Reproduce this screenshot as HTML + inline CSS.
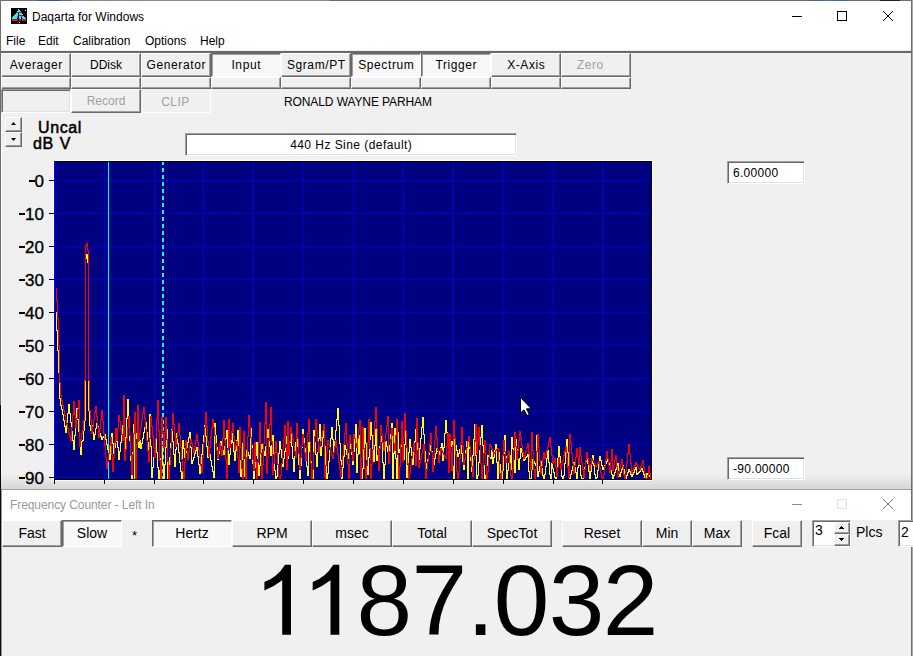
<!DOCTYPE html>
<html><head><meta charset="utf-8">
<style>
*{margin:0;padding:0;box-sizing:border-box}
html,body{width:913px;height:656px;overflow:hidden;background:#f0f0f0;font-family:"Liberation Sans",sans-serif;color:#000}
.a{position:absolute}
.t{position:absolute;white-space:nowrap;line-height:1}
/* raised button */
.btn{position:absolute;background:#f0f0f0;border-top:1px solid #fff;border-left:1px solid #fff;border-right:1px solid #696969;border-bottom:1px solid #696969;box-shadow:inset -1px -1px 0 #a0a0a0}
.prs{position:absolute;background:#f8f8f8;border-top:1px solid #696969;border-left:1px solid #696969;border-right:1px solid #fff;border-bottom:1px solid #fff;box-shadow:inset 1px 1px 0 #a0a0a0}
.sunk{position:absolute;border-top:1px solid #a0a0a0;border-left:1px solid #a0a0a0;border-right:1px solid #fff;border-bottom:1px solid #fff;box-shadow:inset 1px 1px 0 #696969,inset -1px -1px 0 #e3e3e3}
.lbl{position:absolute;left:0;right:0;text-align:center;white-space:nowrap;line-height:1}
</style></head><body>
<!-- background strip top -->

<!-- main window -->
<div class="a" style="left:0;top:0;width:912px;height:489px;background:#f0f0f0;border:1px solid #6e6e6e;border-bottom:none"></div>
<div class="a" style="left:1px;top:1px;width:910px;height:49px;background:#fff"></div>
<div class="a" style="left:1px;top:474px;width:910px;height:15px;background:linear-gradient(#f0f0f0,#d6d6d6)"></div>
<div class="a" style="left:1px;top:50px;width:910px;height:1px;background:#f0f0f0"></div>
<div class="a" style="left:1px;top:51px;width:910px;height:2px;background:#696969"></div>

<!-- title -->
<svg class="a" style="left:11px;top:8px" width="16" height="16" viewBox="0 0 16 16" shape-rendering="crispEdges"><rect width="16" height="16" fill="#000"/>
<rect x="7" y="1" width="1" height="1" fill="#00ffff"/>
<rect x="7" y="2" width="2" height="1" fill="#00ffff"/>
<rect x="14" y="2" width="1" height="1" fill="#ffffff"/>
<rect x="6" y="3" width="4" height="1" fill="#00ffff"/>
<rect x="5" y="4" width="5" height="1" fill="#ff0000"/>
<rect x="5" y="5" width="2" height="1" fill="#00ffff"/>
<rect x="8" y="5" width="3" height="1" fill="#00ffff"/>
<rect x="4" y="6" width="3" height="1" fill="#00ffff"/>
<rect x="8" y="6" width="4" height="1" fill="#00ffff"/>
<rect x="3" y="7" width="4" height="1" fill="#00ffff"/>
<rect x="8" y="7" width="4" height="1" fill="#ff0000"/>
<rect x="2" y="8" width="4" height="1" fill="#00ffff"/>
<rect x="6" y="8" width="1" height="1" fill="#ff00ff"/>
<rect x="8" y="8" width="2" height="1" fill="#00ffff"/>
<rect x="10" y="8" width="1" height="1" fill="#ff0000"/>
<rect x="11" y="8" width="2" height="1" fill="#00ffff"/>
<rect x="1" y="9" width="5" height="1" fill="#00ffff"/>
<rect x="6" y="9" width="1" height="1" fill="#ff00ff"/>
<rect x="8" y="9" width="2" height="1" fill="#00ffff"/>
<rect x="11" y="9" width="3" height="1" fill="#00ffff"/>
<rect x="1" y="10" width="5" height="1" fill="#00ffff"/>
<rect x="8" y="10" width="2" height="1" fill="#00ffff"/>
<rect x="11" y="10" width="1" height="1" fill="#ff00ff"/>
<rect x="12" y="10" width="3" height="1" fill="#00ffff"/>
<rect x="1" y="11" width="6" height="1" fill="#ff0000"/>
<rect x="8" y="11" width="2" height="1" fill="#ff0000"/>
<rect x="11" y="11" width="1" height="1" fill="#ff00ff"/>
<rect x="12" y="11" width="3" height="1" fill="#ff0000"/>
<rect x="1" y="12" width="6" height="1" fill="#ff0000"/>
<rect x="8" y="12" width="2" height="1" fill="#ff0000"/>
<rect x="11" y="12" width="1" height="1" fill="#ff00ff"/>
<rect x="12" y="12" width="3" height="1" fill="#ff0000"/>
<rect x="8" y="14" width="1" height="1" fill="#ffffff"/>
</svg>
<div class="t" style="left:32px;top:11px;font-size:12px">Daqarta for Windows</div>
<!-- window controls -->
<div class="a" style="left:792px;top:16px;width:10px;height:1px;background:#000"></div>
<div class="a" style="left:837px;top:11px;width:10px;height:10px;border:1px solid #000"></div>
<svg class="a" style="left:883px;top:11px" width="10" height="10" viewBox="0 0 10 10"><path d="M0 0 L10 10 M10 0 L0 10" stroke="#000" stroke-width="1"/></svg>
<div class="a" style="left:38px;top:0;width:22px;height:1px;background:#3a5a8a"></div>
<div class="a" style="left:72px;top:0;width:258px;height:1px;background:#8a8a8a"></div>
<div class="a" style="left:810px;top:0;width:16px;height:1px;background:#3a6a9a"></div>
<div class="a" style="left:834px;top:0;width:14px;height:1px;background:#3a6a9a"></div>
<div class="a" style="left:880px;top:0;width:20px;height:1px;background:#222"></div>

<!-- menu -->
<div class="t" style="left:6px;top:35px;font-size:12px">File</div>
<div class="t" style="left:38px;top:35px;font-size:12px">Edit</div>
<div class="t" style="left:73px;top:35px;font-size:12px">Calibration</div>
<div class="t" style="left:145px;top:35px;font-size:12px">Options</div>
<div class="t" style="left:200px;top:35px;font-size:12px">Help</div>

<div class="btn" style="left:1px;top:53px;width:70px;height:24px"><div class="lbl" style="top:5px;font-size:12px;color:#000;letter-spacing:0.6px;padding-left:0.6px;">Averager</div></div>
<div class="btn" style="left:1px;top:77px;width:70px;height:12px"></div>
<div class="btn" style="left:71px;top:53px;width:70px;height:24px"><div class="lbl" style="top:5px;font-size:12px;color:#000;letter-spacing:0px;padding-left:0px;">DDisk</div></div>
<div class="btn" style="left:71px;top:77px;width:70px;height:12px"></div>
<div class="btn" style="left:141px;top:53px;width:70px;height:24px"><div class="lbl" style="top:5px;font-size:12px;color:#000;letter-spacing:0.6px;padding-left:0.6px;">Generator</div></div>
<div class="btn" style="left:141px;top:77px;width:70px;height:12px"></div>
<div class="prs" style="left:211px;top:53px;width:70px;height:24px"><div class="lbl" style="top:5px;font-size:12px;color:#000;letter-spacing:0.6px;padding-left:0.6px;">Input</div></div>
<div class="btn" style="left:211px;top:77px;width:70px;height:12px"></div>
<div class="btn" style="left:281px;top:53px;width:70px;height:24px"><div class="lbl" style="top:5px;font-size:12px;color:#000;letter-spacing:0.6px;padding-left:0.6px;">Sgram/PT</div></div>
<div class="btn" style="left:281px;top:77px;width:70px;height:12px"></div>
<div class="prs" style="left:351px;top:53px;width:70px;height:24px"><div class="lbl" style="top:5px;font-size:12px;color:#000;letter-spacing:0.6px;padding-left:0.6px;">Spectrum</div></div>
<div class="btn" style="left:351px;top:77px;width:70px;height:12px"></div>
<div class="prs" style="left:421px;top:53px;width:70px;height:24px"><div class="lbl" style="top:5px;font-size:12px;color:#000;letter-spacing:0.6px;padding-left:0.6px;">Trigger</div></div>
<div class="btn" style="left:421px;top:77px;width:70px;height:12px"></div>
<div class="btn" style="left:491px;top:53px;width:70px;height:24px"><div class="lbl" style="top:5px;font-size:12px;color:#000;letter-spacing:0.6px;padding-left:0.6px;">X-Axis</div></div>
<div class="btn" style="left:491px;top:77px;width:70px;height:12px"></div>
<div class="btn" style="left:561px;top:53px;width:70px;height:24px"><div class="lbl" style="top:5px;font-size:12px;color:#a0a0a0;letter-spacing:0.6px;padding-left:0.6px;left:-12px">Zero</div></div>
<div class="btn" style="left:561px;top:77px;width:70px;height:12px"></div>

<!-- row3 -->
<div class="sunk" style="left:1px;top:89px;width:70px;height:24px;background:#f0f0f0"></div>
<div class="btn" style="left:71px;top:89px;width:70px;height:24px"><div class="lbl" style="top:5px;font-size:12px;color:#a0a0a0">Record</div></div>
<div class="a" style="left:141px;top:89px;width:70px;height:24px;background:#f0f0f0;border-right:1px solid #fff;border-bottom:1px solid #fff"><div class="lbl" style="top:7px;font-size:12px;color:#a0a0a0;letter-spacing:0.5px">CLIP</div></div>
<div class="t" style="left:284px;top:96px;font-size:12px;letter-spacing:-0.1px">RONALD WAYNE PARHAM</div>

<!-- spinner -->
<div class="btn" style="left:5px;top:117px;width:17px;height:15px"></div>
<div class="btn" style="left:5px;top:132px;width:17px;height:15px"></div>
<svg class="a" style="left:5px;top:117px" width="17" height="30"><path d="M8.5 5 L11 8 L6 8 Z" fill="#000"/><path d="M6 21 L11 21 L8.5 24 Z" fill="#000"/></svg>
<div class="t" style="left:38px;top:120px;font-size:16px;-webkit-text-stroke:0.5px #000;letter-spacing:0.6px">Uncal</div>
<div class="t" style="left:33px;top:136px;font-size:16px;-webkit-text-stroke:0.5px #000;letter-spacing:0.6px;word-spacing:1px">dB V</div>

<!-- sine box -->
<div class="sunk" style="left:185px;top:133px;width:332px;height:23px;background:#fff"><div class="lbl" style="top:5px;font-size:12px;letter-spacing:0.45px;padding-left:0.45px">440 Hz Sine (default)</div></div>

<!-- y labels -->
<div class="t" style="right:869px;top:173px;font-size:17px;-webkit-text-stroke:0.35px #000">0</div>
<div class="a" style="left:29px;top:180px;width:6px;height:2px;background:#000"></div>
<div class="t" style="right:869px;top:206px;font-size:17px;-webkit-text-stroke:0.35px #000">10</div>
<div class="a" style="left:19px;top:213px;width:6px;height:2px;background:#000"></div>
<div class="t" style="right:869px;top:239px;font-size:17px;-webkit-text-stroke:0.35px #000">20</div>
<div class="a" style="left:19px;top:246px;width:6px;height:2px;background:#000"></div>
<div class="t" style="right:869px;top:272px;font-size:17px;-webkit-text-stroke:0.35px #000">30</div>
<div class="a" style="left:19px;top:279px;width:6px;height:2px;background:#000"></div>
<div class="t" style="right:869px;top:305px;font-size:17px;-webkit-text-stroke:0.35px #000">40</div>
<div class="a" style="left:19px;top:312px;width:6px;height:2px;background:#000"></div>
<div class="t" style="right:869px;top:338px;font-size:17px;-webkit-text-stroke:0.35px #000">50</div>
<div class="a" style="left:19px;top:345px;width:6px;height:2px;background:#000"></div>
<div class="t" style="right:869px;top:371px;font-size:17px;-webkit-text-stroke:0.35px #000">60</div>
<div class="a" style="left:19px;top:378px;width:6px;height:2px;background:#000"></div>
<div class="t" style="right:869px;top:404px;font-size:17px;-webkit-text-stroke:0.35px #000">70</div>
<div class="a" style="left:19px;top:411px;width:6px;height:2px;background:#000"></div>
<div class="t" style="right:869px;top:437px;font-size:17px;-webkit-text-stroke:0.35px #000">80</div>
<div class="a" style="left:19px;top:444px;width:6px;height:2px;background:#000"></div>
<div class="t" style="right:869px;top:470px;font-size:17px;-webkit-text-stroke:0.35px #000">90</div>
<div class="a" style="left:19px;top:477px;width:6px;height:2px;background:#000"></div>

<!-- plot -->
<svg class="a" style="left:0;top:0" width="913" height="490">
<rect x="55" y="162" width="596" height="317" fill="#000080"/>
<g shape-rendering="crispEdges">
<rect x="104" y="162" width="1" height="317" fill="#0000c8"/>
<rect x="154" y="162" width="1" height="317" fill="#0000c8"/>
<rect x="203" y="162" width="1" height="317" fill="#0000c8"/>
<rect x="253" y="162" width="1" height="317" fill="#0000c8"/>
<rect x="303" y="162" width="1" height="317" fill="#0000c8"/>
<rect x="353" y="162" width="1" height="317" fill="#0000c8"/>
<rect x="403" y="162" width="1" height="317" fill="#0000c8"/>
<rect x="453" y="162" width="1" height="317" fill="#0000c8"/>
<rect x="503" y="162" width="1" height="317" fill="#0000c8"/>
<rect x="553" y="162" width="1" height="317" fill="#0000c8"/>
<rect x="602" y="162" width="1" height="317" fill="#0000c8"/>
<rect x="55" y="180" width="596" height="1" fill="#0000c8"/>
<rect x="55" y="213" width="596" height="1" fill="#0000c8"/>
<rect x="55" y="246" width="596" height="1" fill="#0000c8"/>
<rect x="55" y="279" width="596" height="1" fill="#0000c8"/>
<rect x="55" y="312" width="596" height="1" fill="#0000c8"/>
<rect x="55" y="345" width="596" height="1" fill="#0000c8"/>
<rect x="55" y="378" width="596" height="1" fill="#0000c8"/>
<rect x="55" y="411" width="596" height="1" fill="#0000c8"/>
<rect x="55" y="444" width="596" height="1" fill="#0000c8"/>
<rect x="55" y="477" width="596" height="1" fill="#0000c8"/>
</g>
<rect x="108" y="162" width="1" height="317" fill="#00ffff"/>
<line x1="163" y1="161" x2="163" y2="479" stroke="#00ffff" stroke-width="2" stroke-dasharray="4,3" shape-rendering="crispEdges"/>
<g transform="translate(0.5,0)"><path d="M56 312v19M57 330v21M58 350v23M59 372v27M60 398v8M61 405v5M62 409v6M63 414v7M64 420v7M65 426v7M66 422v11M67 413v10M68 404v10M69 404v10M70 413v10M71 422v10M72 431v10M73 440v10M74 435v15M75 421v15M76 408v14M77 408v12M78 419v13M79 431v12M80 442v13M81 441v14M82 440v2M83 430v11M84 420v11M85 258v163M86 254v5M87 254v9M88 262v149M89 410v16M90 425v6M91 425v6M92 425v8M93 432v8M94 434v6M95 428v7M96 423v6M97 423v4M98 426v4M99 429v5M100 433v4M101 436v4M102 437v3M103 436v2M104 434v3M105 434v6M106 439v6M107 444v6M108 449v6M109 454v6M110 446v14M111 433v14M112 433v11M113 443v11M114 447v7M115 441v7M116 436v6M117 436v12M118 447v13M119 451v9M120 442v10M121 434v9M122 425v10M123 425v16M124 440v16M125 437v19M126 418v20M127 399v20M128 399v21M129 419v22M130 440v21M131 460v19M132 452v27M133 424v29M134 424v55M135 433v46M136 433v6M137 438v5M138 442v6M139 440v8M140 440v9M141 443v6M142 438v6M143 432v7M144 427v6M145 422v6M146 422v11M147 432v11M148 442v12M149 414v40M150 414v33M151 446v32M152 467v11M153 457v11M154 448v10M155 438v11M156 438v15M157 452v16M158 467v12M159 470v9M160 458v13M161 446v13M162 446v19M163 464v15M164 464v15M165 447v18M166 429v19M167 429v50M168 471v8M169 457v15M170 443v15M171 429v15M172 429v13M173 441v14M174 454v13M175 449v18M176 433v17M177 433v11M178 443v10M179 452v11M180 462v10M181 471v8M182 440v39M183 440v9M184 448v10M185 452v6M186 447v6M187 442v6M188 437v6M189 432v6M190 432v16M191 447v17M192 460v4M193 457v4M194 453v5M195 450v4M196 447v4M197 447v10M198 456v9M199 464v10M200 463v11M201 454v10M202 444v11M203 435v10M204 425v11M205 425v12M206 436v11M207 446v12M208 449v9M209 449v6M210 454v7M211 460v7M212 466v6M213 471v7M214 423v55M215 423v13M216 435v13M217 447v13M218 453v7M219 447v7M220 441v7M221 441v5M222 445v6M223 450v5M224 446v9M225 438v9M226 430v9M227 430v18M228 447v18M229 454v11M230 443v12M231 433v11M232 433v10M233 442v10M234 451v10M235 450v11M236 440v11M237 430v11M238 430v16M239 445v16M240 460v17M241 459v18M242 443v17M243 443v17M244 459v18M245 463v14M246 450v14M247 450v3M248 452v4M249 455v4M250 428v31M251 428v18M252 445v19M253 463v16M254 467v12M255 455v13M256 442v14M257 442v17M258 458v18M259 465v11M260 454v12M261 444v11M262 444v5M263 448v4M264 451v5M265 446v10M266 437v10M267 429v9M268 429v9M269 437v10M270 446v10M271 445v11M272 435v11M273 435v19M274 453v18M275 470v9M276 476v3M277 464v13M278 453v12M279 441v13M280 441v9M281 449v9M282 457v10M283 458v9M284 451v8M285 443v9M286 436v8M287 436v23M288 450v9M289 442v9M290 434v9M291 434v13M292 446v13M293 458v14M294 456v16M295 442v15M296 428v15M297 428v19M298 446v19M299 464v15M300 465v14M301 447v19M302 429v19M303 429v10M304 438v11M305 448v10M306 457v10M307 466v10M308 442v34M309 442v10M310 451v11M311 461v10M312 470v9M313 430v49M314 430v13M315 442v13M316 454v13M317 452v15M318 438v15M319 424v15M320 424v32M321 446v10M322 437v10M323 427v11M324 427v20M325 446v20M326 465v14M327 473v6M328 461v13M329 450v12M330 438v13M331 427v12M332 427v13M333 439v14M334 441v12M335 430v12M336 419v12M337 408v12M338 408v18M339 425v19M340 443v18M341 460v19M342 467v12M343 456v12M344 445v12M345 445v5M346 449v6M347 454v5M348 453v6M349 448v6M350 443v6M351 443v12M352 454v11M353 451v14M354 438v14M355 424v15M356 424v49M357 454v19M358 435v20M359 435v19M360 453v18M361 470v9M362 468v11M363 448v21M364 428v21M365 428v16M366 443v17M367 459v16M368 457v18M369 439v19M370 422v18M371 422v14M372 435v14M373 448v14M374 445v17M375 429v17M376 429v32M377 455v6M378 450v6M379 446v5M380 441v6M381 436v6M382 436v27M383 462v17M384 464v15M385 441v24M386 441v6M387 446v6M388 451v5M389 445v11M390 434v12M391 423v12M392 423v56M393 453v26M394 428v26M395 428v31M396 458v21M397 432v47M398 432v21M399 449v4M400 446v4M401 443v4M402 443v9M403 451v9M404 444v16M405 430v15M406 430v48M407 465v13M408 452v14M409 439v14M410 439v9M411 447v9M412 455v10M413 452v13M414 441v12M415 429v13M416 429v11M417 439v11M418 449v11M419 448v12M420 438v11M421 427v12M422 417v11M423 417v18M424 434v18M425 451v18M426 463v6M427 459v5M428 454v6M429 450v5M430 445v6M431 445v7M432 451v8M433 458v7M434 458v7M435 453v6M436 448v6M437 448v4M438 451v5M439 451v5M440 447v5M441 443v5M442 443v18M443 447v14M444 433v15M445 420v14M446 420v13M447 432v13M448 444v12M449 451v5M450 446v6M451 441v6M452 441v26M453 466v13M454 439v40M455 439v7M456 445v6M457 450v7M458 453v4M459 449v5M460 445v5M461 445v9M462 453v9M463 461v9M464 459v11M465 450v10M466 441v10M467 441v38M468 437v42M469 437v12M470 448v13M471 460v12M472 455v17M473 439v17M474 424v16M475 424v32M476 455v24M477 475v4M478 462v14M479 450v13M480 437v14M481 425v13M482 425v21M483 445v21M484 465v14M485 475v4M486 465v11M487 455v11M488 455v2M489 456v2M490 457v2M491 450v9M492 450v14M493 457v7M494 450v8M495 444v7M496 444v19M497 462v17M498 452v27M499 452v13M500 464v13M501 476v3M502 470v9M503 453v18M504 435v19M505 435v22M506 456v23M507 470v9M508 463v8M509 455v9M510 455v15M511 437v33M512 437v12M513 448v13M514 460v13M515 439v34M516 439v11M517 449v11M518 459v11M519 458v12M520 448v11M521 448v5M522 452v5M523 456v5M524 459v2M525 457v3M526 456v2M527 454v3M528 454v18M529 471v8M530 478v1M531 469v10M532 459v11M533 459v3M534 461v3M535 463v3M536 435v31M537 435v42M538 471v6M539 466v6M540 461v6M541 461v8M542 468v8M543 475v4M544 474v5M545 466v9M546 458v9M547 450v9M548 450v13M549 462v13M550 474v5M551 463v16M552 463v6M553 468v5M554 472v6M555 477v2M556 470v9M557 458v13M558 446v13M559 446v11M560 456v11M561 466v11M562 476v3M563 475v4M564 463v13M565 451v13M566 439v13M567 439v14M568 452v14M569 465v14M570 474v5M571 470v5M572 466v5M573 462v5M574 462v6M575 467v6M576 472v7M577 467v12M578 456v12M579 456v10M580 465v11M581 475v4M582 478v1M583 473v6M584 467v7M585 461v7M586 455v7M587 455v9M588 463v9M589 471v8M590 471v8M591 463v9M592 455v9M593 455v11M594 465v10M595 474v5M596 477v2M597 470v8M598 463v8M599 456v8M600 456v5M601 460v6M602 465v5M603 467v3M604 465v3M605 463v3M606 461v3M607 459v3M608 459v5M609 463v5M610 467v4M611 470v5M612 474v5M613 475v4M614 472v4M615 469v4M616 466v4M617 463v4M618 463v8M619 470v7M620 472v5M621 469v4M622 465v5M623 465v5M624 469v6M625 474v5M626 475v4M627 472v4M628 469v4M629 469v3M630 471v4M631 474v3M632 474v3M633 472v3M634 469v4M635 467v3M636 467v8M637 473v2M638 472v2M639 471v2M640 469v3M641 468v2M642 468v4M643 471v4M644 474v4M645 477v2M646 473v6M647 473v2M648 474v2M649 475v2M650 474v3" fill="none" stroke="#ffff00" stroke-width="1" shape-rendering="crispEdges"/>
<path d="M56 288v13M57 300v19M58 318v28M59 345v38M60 382v14M61 395v6M62 400v6M63 405v6M64 410v6M65 415v6M66 420v5M67 424v5M68 428v5M69 432v5M70 436v5M71 427v14M72 414v14M73 401v14M74 401v14M75 414v14M76 418v10M77 409v10M78 400v10M79 400v47M80 439v8M81 433v7M82 430v4M83 420v11M84 380v41M85 245v136M86 243v3M87 243v8M88 250v131M89 380v31M90 410v11M91 420v14M92 426v8M93 419v8M94 412v8M95 406v7M96 406v11M97 416v12M98 427v11M99 428v10M100 419v10M101 410v10M102 410v12M103 421v13M104 433v13M105 445v13M106 457v12M107 461v8M108 453v9M109 445v9M110 437v9M111 437v18M112 454v18M113 457v15M114 442v16M115 428v15M116 428v13M117 428v13M118 415v14M119 415v7M120 421v8M121 428v7M122 434v7M123 395v46M124 395v66M125 449v12M126 438v12M127 427v12M128 416v12M129 416v20M130 435v21M131 455v20M132 454v21M133 433v22M134 412v22M135 412v67M136 444v35M137 405v40M138 405v36M139 433v8M140 427v7M141 420v8M142 413v8M143 407v7M144 407v12M145 418v12M146 429v12M147 440v11M148 450v12M149 438v24M150 416v23M151 416v11M152 426v11M153 436v12M154 447v11M155 438v20M156 419v20M157 400v20M158 400v31M159 430v31M160 460v19M161 417v62M162 417v16M163 432v16M164 432v16M165 417v16M166 417v23M167 439v23M168 461v18M169 465v14M170 448v18M171 430v19M172 413v18M173 413v12M174 424v12M175 435v12M176 438v9M177 431v8M178 423v9M179 423v13M180 435v13M181 447v13M182 459v13M183 471v8M184 462v17M185 440v23M186 440v11M187 450v10M188 452v8M189 445v8M190 439v7M191 439v5M192 443v6M193 448v5M194 446v7M195 440v7M196 434v7M197 434v9M198 442v8M199 449v9M200 457v9M201 465v8M202 457v16M203 442v16M204 427v16M205 412v16M206 412v15M207 426v16M208 441v16M209 447v10M210 437v11M211 428v10M212 419v10M213 419v9M214 427v9M215 435v9M216 443v8M217 450v9M218 450v9M219 443v8M220 443v7M221 449v7M222 438v18M223 420v19M224 420v21M225 440v20M226 459v20M227 449v30M228 419v31M229 419v29M230 439v9M231 431v9M232 423v9M233 423v14M234 436v14M235 445v5M236 441v5M237 441v17M238 457v16M239 427v46M240 427v21M241 447v22M242 468v11M243 431v48M244 431v25M245 455v24M246 457v22M247 436v22M248 415v22M249 415v12M250 426v12M251 437v12M252 448v12M253 459v12M254 442v29M255 442v20M256 461v18M257 462v17M258 442v21M259 422v21M260 422v32M261 453v26M262 464v15M263 443v22M264 423v21M265 402v22M266 402v72M267 457v17M268 440v18M269 424v17M270 407v18M271 407v35M272 441v34M273 463v12M274 452v12M275 441v12M276 441v12M277 452v13M278 464v13M279 476v3M280 475v4M281 463v13M282 450v14M283 438v13M284 425v14M285 425v23M286 447v23M287 421v49M288 421v35M289 441v15M290 427v15M291 427v7M292 433v7M293 439v7M294 445v7M295 451v7M296 423v35M297 423v16M298 438v16M299 453v17M300 457v13M301 446v12M302 434v13M303 434v10M304 443v10M305 452v9M306 447v14M307 433v15M308 419v15M309 419v23M310 441v23M311 463v16M312 469v10M313 452v18M314 436v17M315 419v18M316 419v12M317 430v12M318 441v12M319 446v7M320 441v6M321 435v7M322 430v6M323 424v7M324 424v54M325 465v13M326 452v14M327 440v13M328 440v5M329 444v4M330 447v5M331 451v5M332 455v4M333 452v7M334 446v7M335 440v7M336 440v8M337 447v8M338 454v9M339 462v8M340 469v8M341 465v12M342 455v11M343 444v12M344 433v12M345 423v11M346 423v21M347 443v22M348 464v15M349 435v44M350 435v9M351 443v9M352 451v10M353 434v27M354 434v5M355 438v6M356 443v5M357 438v10M358 429v10M359 420v10M360 420v59M361 458v21M362 427v32M363 427v22M364 448v21M365 468v11M366 465v14M367 442v24M368 419v24M369 419v30M370 448v31M371 464v15M372 449v16M373 435v15M374 421v15M375 407v15M376 407v22M377 428v22M378 449v22M379 448v23M380 425v24M381 425v10M382 434v9M383 442v9M384 441v10M385 433v9M386 425v9M387 416v10M388 416v48M389 451v13M390 439v13M391 428v12M392 428v8M393 435v9M394 443v8M395 435v16M396 419v17M397 419v36M398 454v25M399 466v13M400 444v23M401 421v24M402 421v41M403 437v25M404 413v25M405 413v18M406 430v18M407 447v17M408 463v16M409 473v6M410 465v9M411 458v8M412 451v8M413 443v9M414 443v12M415 454v12M416 418v48M417 418v25M418 442v26M419 462v6M420 458v5M421 453v6M422 449v5M423 444v6M424 444v19M425 462v17M426 470v9M427 461v10M428 452v10M429 443v10M430 433v11M431 433v20M432 452v20M433 456v16M434 441v16M435 426v16M436 426v13M437 438v13M438 450v13M439 455v8M440 448v8M441 448v3M442 450v3M443 452v3M444 454v3M445 456v3M446 446v13M447 433v14M448 433v40M449 434v39M450 434v19M451 452v19M452 445v26M453 420v26M454 420v18M455 437v18M456 454v18M457 471v8M458 473v6M459 458v16M460 442v17M461 427v16M462 427v20M463 446v19M464 459v6M465 453v7M466 447v7M467 441v7M468 436v6M469 436v11M470 446v11M471 456v11M472 466v11M473 459v18M474 441v19M475 424v18M476 424v30M477 440v14M478 427v14M479 427v19M480 445v19M481 463v16M482 467v12M483 453v15M484 440v14M485 440v24M486 463v16M487 471v8M488 457v15M489 444v14M490 444v3M491 446v3M492 448v4M493 451v3M494 452v2M495 450v3M496 449v2M497 448v2M498 448v13M499 460v14M500 473v6M501 470v9M502 455v16M503 440v16M504 440v12M505 451v12M506 458v5M507 455v4M508 451v5M509 451v13M510 463v13M511 475v4M512 468v11M513 450v19M514 432v19M515 432v15M516 446v14M517 450v10M518 440v11M519 431v10M520 431v8M521 438v8M522 445v8M523 452v7M524 455v4M525 451v5M526 447v5M527 443v5M528 443v10M529 452v10M530 461v9M531 432v38M532 432v19M533 450v20M534 469v10M535 469v10M536 451v19M537 434v18M538 434v14M539 447v14M540 460v14M541 466v8M542 459v8M543 452v8M544 452v7M545 454v5M546 450v5M547 446v5M548 441v6M549 437v5M550 437v10M551 446v10M552 455v9M553 461v3M554 458v4M555 458v10M556 467v10M557 467v10M558 458v10M559 458v6M560 463v7M561 464v6M562 460v5M563 455v6M564 451v5M565 447v5M566 447v11M567 457v11M568 467v11M569 434v44M570 434v10M571 443v11M572 453v11M573 463v11M574 465v9M575 457v9M576 448v10M577 448v9M578 456v9M579 447v18M580 447v9M581 455v8M582 462v8M583 469v9M584 469v9M585 460v10M586 452v9M587 452v7M588 458v7M589 464v7M590 464v7M591 458v7M592 458v3M593 460v3M594 462v3M595 464v3M596 465v2M597 463v3M598 461v3M599 461v7M600 467v6M601 472v6M602 477v2M603 474v5M604 466v9M605 459v8M606 451v9M607 451v8M608 458v8M609 465v8M610 460v13M611 449v12M612 449v22M613 465v6M614 460v6M615 455v6M616 455v12M617 466v12M618 473v5M619 468v6M620 464v5M621 459v6M622 459v8M623 466v9M624 474v5M625 471v8M626 462v10M627 453v10M628 444v10M629 444v11M630 454v10M631 463v11M632 470v4M633 467v4M634 465v3M635 462v4M636 462v3M637 464v3M638 466v3M639 468v2M640 466v4M641 463v4M642 460v4M643 460v8M644 467v7M645 473v6M646 478v1M647 476v3M648 466v11M649 466v8M650 473v6" fill="none" stroke="#ff0000" stroke-width="1" shape-rendering="crispEdges"/></g>
<g shape-rendering="crispEdges"><rect x="54" y="161" width="598" height="1" fill="#000"/><rect x="54" y="161" width="1" height="318" fill="#0000ff"/><rect x="651" y="161" width="1" height="319" fill="#000"/><rect x="54" y="479" width="598" height="1" fill="#000"/><rect x="652" y="160" width="1" height="321" fill="#fff"/><rect x="53" y="480" width="600" height="1" fill="#fff"/><rect x="53" y="160" width="1" height="320" fill="#fff"/><rect x="53" y="160" width="599" height="1" fill="#fff"/></g>
<g shape-rendering="crispEdges">
<rect x="49" y="180" width="5" height="1" fill="#000"/>
<rect x="49" y="213" width="5" height="1" fill="#000"/>
<rect x="49" y="246" width="5" height="1" fill="#000"/>
<rect x="49" y="279" width="5" height="1" fill="#000"/>
<rect x="49" y="312" width="5" height="1" fill="#000"/>
<rect x="49" y="345" width="5" height="1" fill="#000"/>
<rect x="49" y="378" width="5" height="1" fill="#000"/>
<rect x="49" y="411" width="5" height="1" fill="#000"/>
<rect x="49" y="444" width="5" height="1" fill="#000"/>
<rect x="49" y="477" width="5" height="1" fill="#000"/>
<rect x="54" y="479" width="1" height="5" fill="#000"/>
<rect x="104" y="479" width="1" height="5" fill="#000"/>
<rect x="154" y="479" width="1" height="5" fill="#000"/>
<rect x="203" y="479" width="1" height="5" fill="#000"/>
<rect x="253" y="479" width="1" height="5" fill="#000"/>
<rect x="303" y="479" width="1" height="5" fill="#000"/>
<rect x="353" y="479" width="1" height="5" fill="#000"/>
<rect x="403" y="479" width="1" height="5" fill="#000"/>
<rect x="453" y="479" width="1" height="5" fill="#000"/>
<rect x="503" y="479" width="1" height="5" fill="#000"/>
<rect x="553" y="479" width="1" height="5" fill="#000"/>
<rect x="602" y="479" width="1" height="5" fill="#000"/>
</g>
<path d="M520.5 397.5 L520.5 413 L524 409.8 L527 415.5 L529.3 414.5 L526.5 408.8 L531.3 408.8 Z" fill="#fff" stroke="#000" stroke-width="1"/>
</svg>

<!-- right boxes -->
<div class="sunk" style="left:727px;top:161px;width:78px;height:23px;background:#fff"><div class="t" style="left:5px;top:5px;font-size:12px;letter-spacing:0.3px">6.00000</div></div>
<div class="sunk" style="left:727px;top:457px;width:78px;height:23px;background:#fff"><div class="t" style="left:5px;top:5px;font-size:12px;letter-spacing:0.3px">-90.00000</div></div>

<!-- right edge behind -->
<div class="a" style="left:911px;top:0;width:1px;height:656px;background:#6e6e6e"></div>
<div class="a" style="left:0;top:405px;width:1px;height:251px;background:#0a0a0a"></div>
<div class="a" style="left:1px;top:53px;width:1px;height:36px;background:#fafafa"></div>
<div class="a" style="left:1px;top:113px;width:1px;height:360px;background:#fafafa"></div>
<div class="a" style="left:912px;top:0;width:1px;height:656px;background:#a8a8a8"></div>

<!-- freq counter window -->
<div class="a" style="left:1px;top:489px;width:910px;height:1px;background:#a0a0a0"></div>
<div class="a" style="left:0;top:490px;width:911px;height:166px;background:#f0f0f0;border-left:1px solid #0a0a0a"></div>
<div class="a" style="left:1px;top:490px;width:1px;height:166px;background:#9a9a9a"></div>
<div class="a" style="left:2px;top:490px;width:909px;height:30px;background:#fff"></div>
<div class="t" style="left:10px;top:499px;font-size:12px;color:#999;letter-spacing:-0.08px">Frequency Counter - Left In</div>
<div class="a" style="left:792px;top:504px;width:10px;height:1px;background:#8a8a8a"></div>
<div class="a" style="left:837px;top:499px;width:10px;height:10px;border:1px solid #e0e0e0"></div>
<svg class="a" style="left:883px;top:499px" width="10" height="10" viewBox="0 0 10 10"><path d="M0 0 L10 10 M10 0 L0 10" stroke="#777" stroke-width="1"/></svg>

<div class="btn" style="left:2px;top:520px;width:60px;height:27px"><div class="lbl" style="top:5px;font-size:14px">Fast</div></div>
<div class="prs" style="left:62px;top:520px;width:60px;height:27px"><div class="lbl" style="top:5px;font-size:14px">Slow</div></div>
<div class="prs" style="left:152px;top:520px;width:80px;height:27px"><div class="lbl" style="top:5px;font-size:14px">Hertz</div></div>
<div class="btn" style="left:232px;top:520px;width:80px;height:27px"><div class="lbl" style="top:5px;font-size:14px">RPM</div></div>
<div class="btn" style="left:312px;top:520px;width:80px;height:27px"><div class="lbl" style="top:5px;font-size:14px">msec</div></div>
<div class="btn" style="left:392px;top:520px;width:80px;height:27px"><div class="lbl" style="top:5px;font-size:14px">Total</div></div>
<div class="btn" style="left:472px;top:520px;width:80px;height:27px"><div class="lbl" style="top:5px;font-size:14px">SpecTot</div></div>
<div class="btn" style="left:562px;top:520px;width:80px;height:27px"><div class="lbl" style="top:5px;font-size:14px">Reset</div></div>
<div class="btn" style="left:642px;top:520px;width:50px;height:27px"><div class="lbl" style="top:5px;font-size:14px">Min</div></div>
<div class="btn" style="left:692px;top:520px;width:50px;height:27px"><div class="lbl" style="top:5px;font-size:14px">Max</div></div>
<div class="btn" style="left:752px;top:520px;width:50px;height:27px"><div class="lbl" style="top:5px;font-size:14px">Fcal</div></div>
<div class="t" style="left:132px;top:529px;font-size:13px">*</div>
<div class="sunk" style="left:812px;top:520px;width:39px;height:27px;background:#fff"><div class="t" style="left:2px;top:2px;font-size:14px">3</div></div>
<div class="btn" style="left:834px;top:522px;width:16px;height:12px"></div>
<div class="btn" style="left:834px;top:534px;width:16px;height:12px"></div>
<svg class="a" style="left:834px;top:522px" width="16" height="24" shape-rendering="crispEdges"><rect x="7" y="4" width="1" height="1"/><rect x="6" y="5" width="3" height="1"/><rect x="5" y="6" width="5" height="1"/><rect x="5" y="16" width="5" height="1"/><rect x="6" y="17" width="3" height="1"/><rect x="7" y="18" width="1" height="1"/></svg>
<div class="t" style="left:856px;top:525px;font-size:14px">Plcs</div>
<div class="sunk" style="left:898px;top:520px;width:20px;height:27px;background:#fff"><div class="t" style="left:2px;top:4px;font-size:14px">2</div></div>

<svg class="a" style="left:0;top:0" width="913" height="656"><path d="M291 564.8 L291 634.7 L282.2 634.7 L282.2 580.3 Q273.3 587.2 264.4 590.5 L264.4 582 Q277.3 577.6 285 564.8 Z" fill="#000"/><path transform="translate(48.3,0)" d="M291 564.8 L291 634.7 L282.2 634.7 L282.2 580.3 Q273.3 587.2 264.4 590.5 L264.4 582 Q277.3 577.6 285 564.8 Z" fill="#000"/></svg>
<div class="t" style="left:356.54px;top:550px;font-size:100px">8</div>
<div class="t" style="left:411.59px;top:550px;font-size:100px">7</div>
<div class="t" style="left:466.81px;top:550px;font-size:100px">.</div>
<div class="t" style="left:493.64px;top:550px;font-size:100px">0</div>
<div class="t" style="left:548.84px;top:550px;font-size:100px">3</div>
<div class="t" style="left:602.69px;top:550px;font-size:100px">2</div>
</body></html>
